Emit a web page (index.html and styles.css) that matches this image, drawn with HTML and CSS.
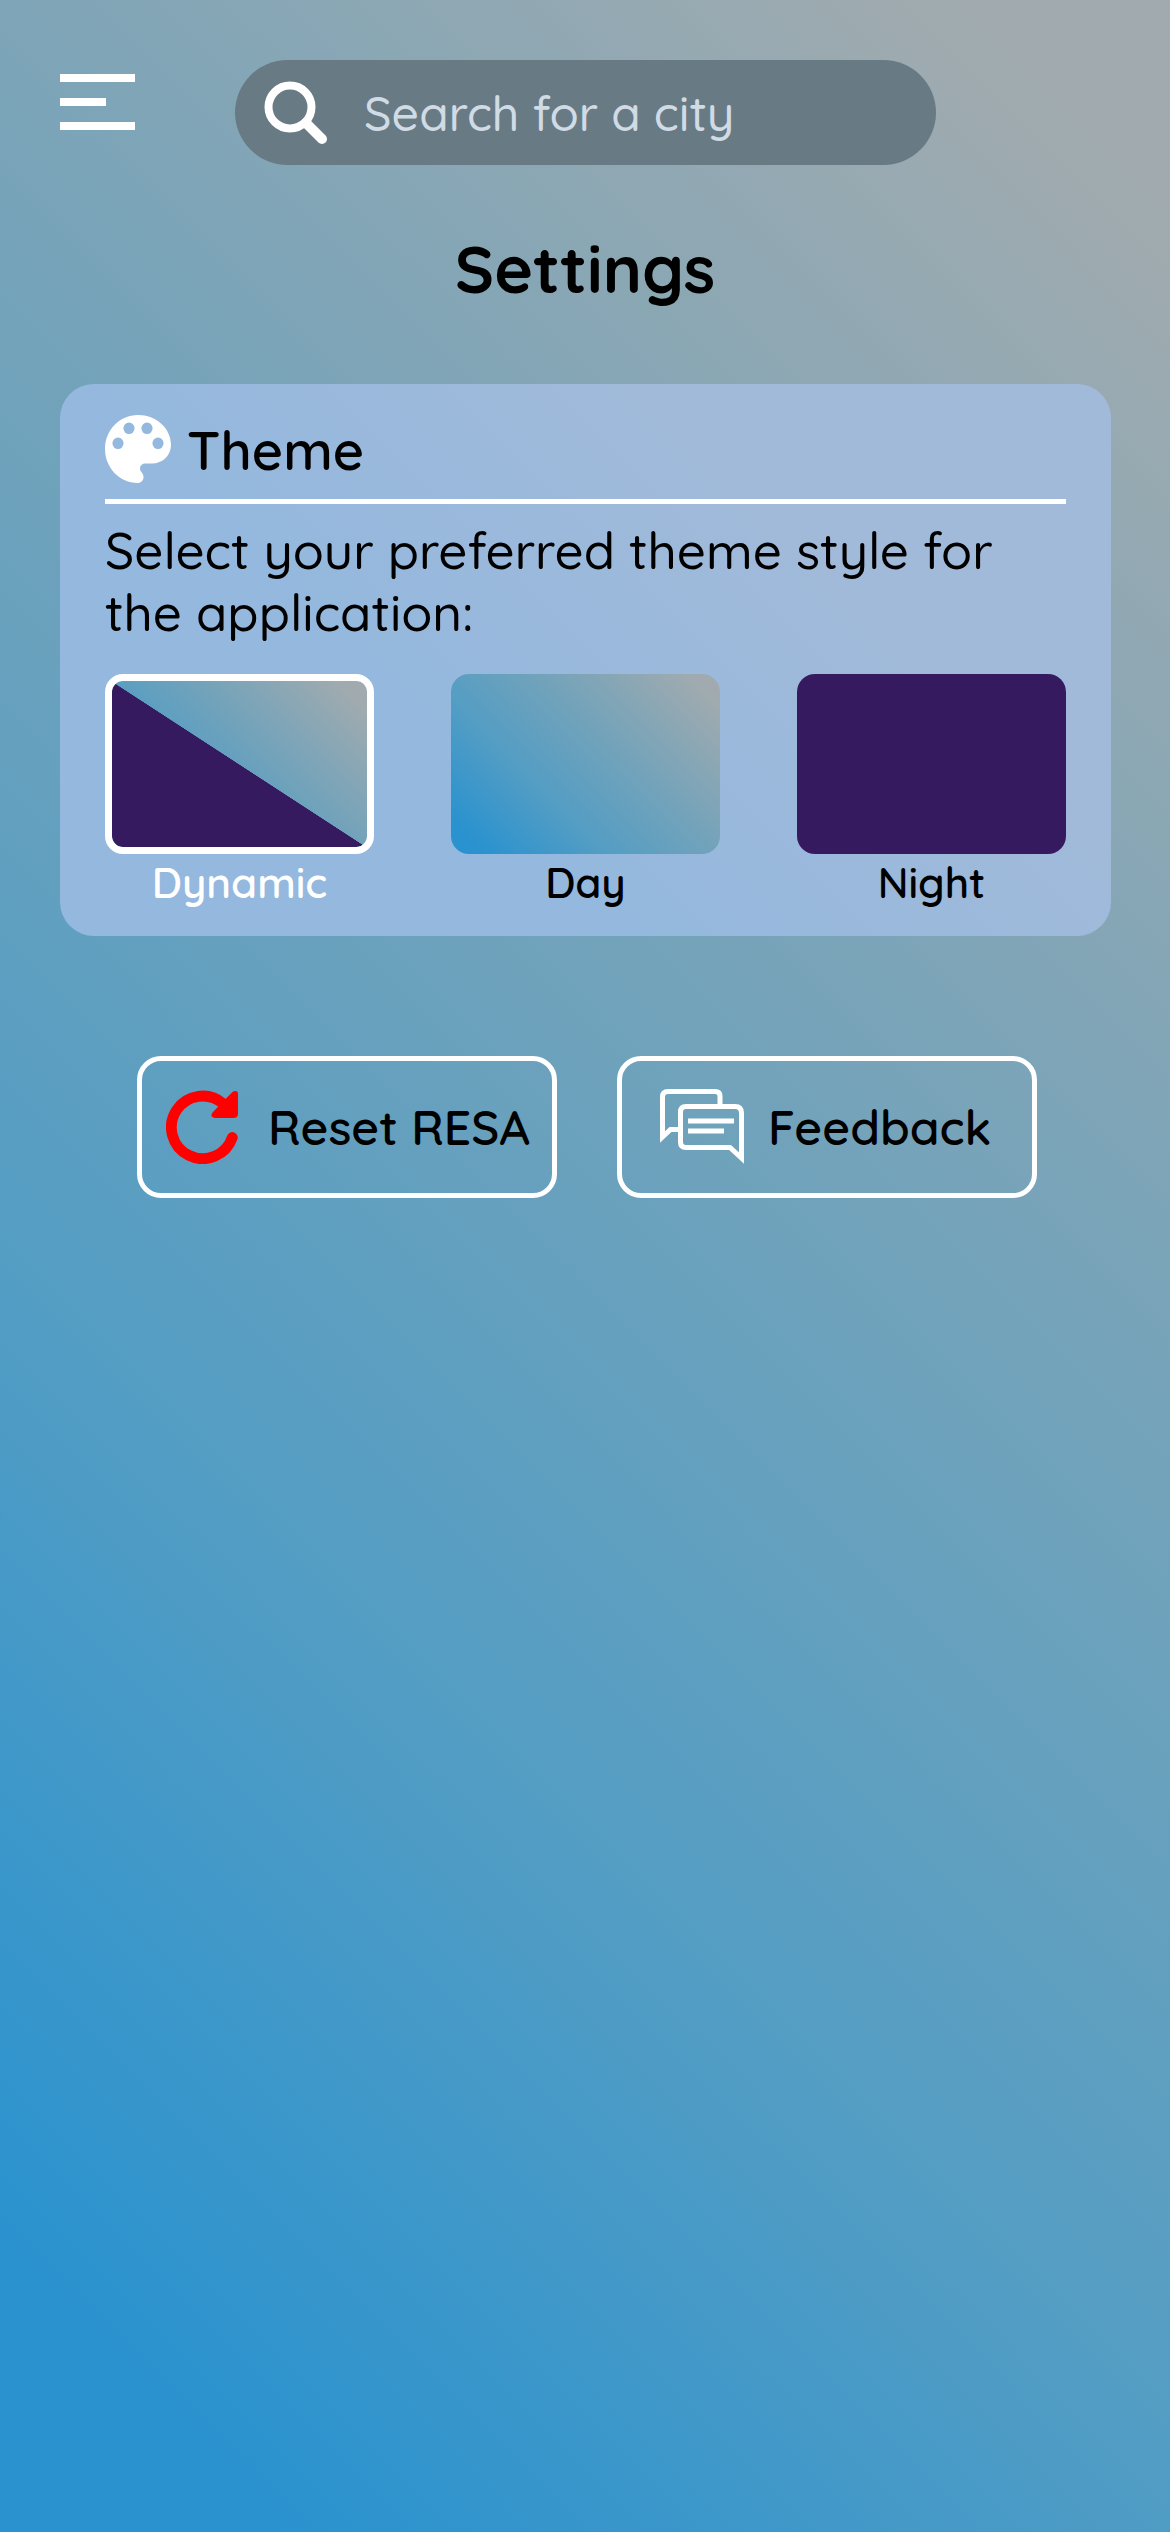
FILE: index.html
```html
<!DOCTYPE html>
<html lang="en">
<head>
<meta charset="utf-8">
<title>Settings</title>
<link rel="stylesheet" href="styles.css">
</head>
<body>
<header class="topbar">
  <button class="menu" aria-label="Menu"><span class="bar"></span><span class="bar bar-short"></span><span class="bar"></span></button>
  <div class="search">
    <svg class="search-icon" viewBox="0 0 64 64" fill="none" stroke="#fff" stroke-linecap="round"><circle cx="26" cy="26" r="21.5" stroke-width="8"/><path d="M42 42L58 58" stroke-width="10"/></svg>
    <span class="search-text">Search for a city</span>
  </div>
</header>
<main>
  <h1 class="title">Settings</h1>
  <section class="card">
    <div class="card-head">
      <svg class="palette" viewBox="0 0 66 68"><path fill="#fff" fill-rule="evenodd" d="M33 0C14.500 0 0 15 0 34C0 53 15 68 32.500 68C36 68 38.500 65.500 38.500 62C38.500 60 37.500 58.500 36.500 57.300C35.500 56 35 55 35 53.500C35 50.500 37.500 48.500 40.500 48.500H47C57.500 48.500 66 40.500 66 30C66 13 51 0 33 0ZM13 22.500a5.600 5.800 0 1 1 0 11.600a5.600 5.800 0 1 1 0-11.600ZM24 7.500a5.600 5.800 0 1 1 0 11.600a5.600 5.800 0 1 1 0-11.600ZM42 7.500a5.600 5.800 0 1 1 0 11.600a5.600 5.800 0 1 1 0-11.600ZM53 22.500a5.600 5.800 0 1 1 0 11.600a5.600 5.800 0 1 1 0-11.600Z"/></svg>
      <h2 class="card-title">Theme</h2>
    </div>
    <p class="desc">Select your preferred theme style for<br>the application:</p>
    <div class="themes">
      <div class="theme selected"><div class="swatch dynamic"></div><span class="label">Dynamic</span></div>
      <div class="theme"><div class="swatch day"></div><span class="label">Day</span></div>
      <div class="theme"><div class="swatch night"></div><span class="label">Night</span></div>
    </div>
  </section>
  <div class="actions">
    <button class="action reset">
      <svg class="reset-icon" viewBox="0 0 74 74"><path d="M57 13.500A31.300 31.300 0 1 0 66.300 47.500" fill="none" stroke="red" stroke-width="10.800" stroke-linecap="round"/><path fill="red" d="M47 22L59 9.500L67 1.500Q72 -0.500 72 4V23.500Q72 28 67.500 28H49Q43 27 47 22Z"/></svg>
      <span>Reset RESA</span>
    </button>
    <button class="action feedback">
      <svg class="feedback-icon" viewBox="0 0 84 76" fill="none" stroke="#fff" stroke-width="5"><path d="M60 17V7Q60 2.500 55 2.500H8Q2.500 2.500 2.500 8V48L10.500 40.500H20"/><path d="M26 17.500H75Q81.500 17.500 81.500 24V69L70 58.500H26Q20.500 58.500 20.500 53V23Q20.500 17.500 26 17.500Z"/><path d="M28 32H74M28 42H64"/></svg>
      <span>Feedback</span>
    </button>
  </div>
</main>
</body>
</html>
```

FILE: styles.css
```css
* { box-sizing: border-box; }
body {
  margin: 0;
  min-height: 2532px;
  padding: 60px 60px 0;
  font-family: Quicksand, Lato, sans-serif;
  font-weight: 500;
  color: #000;
  background: linear-gradient(45deg, #2992cf 7%, #539dc4 34%, #74a3ba 61%, #a1abaf 94%);
}
button { background: none; border: 0; padding: 0; font: inherit; color: inherit; }
.topbar { display: flex; align-items: flex-start; height: 106px; }
.menu { width: 75px; margin-top: 14px; display: flex; flex-direction: column; gap: 16px; }
.bar { width: 75px; height: 8px; background: #fff; }
.bar-short { width: 46px; }
.search {
  width: 701px; height: 105px; margin-left: 100px; padding-left: 29px;
  display: flex; align-items: center; gap: 36px;
  border-radius: 53px; background: #687a84;
}
.search-icon { width: 64px; height: 64px; }
.search-text { font-size: 48px; line-height: 58px; color: #d0dbe5; white-space: nowrap; }
.title { margin: 67px 0 0; height: 72px; line-height: 72px; font-size: 66px; font-weight: 700; text-align: center; }
.card {
  margin-top: 79px; height: 552px; width: 1051px; padding: 31px 45px 0; border-radius: 34px;
  background: linear-gradient(45deg, #94b8de 35%, #a2bad9 75%);
}
.card-head { display: flex; align-items: flex-start; gap: 16px; height: 89px; border-bottom: 5px solid #fff; }
.palette { width: 66px; height: 68px; }
.card-title { margin: 2px 0 0; font-size: 54px; line-height: 66px; font-weight: 600; white-space: nowrap; }
.desc { margin: 15px 0 0; font-size: 51px; line-height: 62px; white-space: nowrap; }
.themes { display: flex; justify-content: space-between; margin-top: 31px; }
.theme { width: 269px; display: flex; flex-direction: column; align-items: center; }
.swatch { width: 269px; height: 180px; border-radius: 18px; }
.dynamic { border: 7px solid #fff; background: linear-gradient(to top right, #361a60 49.700%, transparent 49.900%) padding-box, linear-gradient(45deg, #2992cf 7%, #539dc4 34%, #74a3ba 61%, #a1abaf 94%) padding-box; }
.day { background: linear-gradient(45deg, #2992cf 7%, #539dc4 34%, #74a3ba 61%, #a1abaf 94%); }
.night { background: #361a60; }
.label { margin-top: 3px; font-size: 42px; line-height: 52px; font-weight: 600; white-space: nowrap; }
.selected .label { color: #fff; }
.actions { display: flex; gap: 60px; margin: 120px 0 0 77px; }
.action { width: 420px; height: 142px; display: flex; align-items: center; border: 5px solid #fff; border-radius: 24px; font-size: 48px; line-height: 58px; font-weight: 600; white-space: nowrap; }
.reset { padding-left: 24px; gap: 28px; }
.reset-icon { width: 74px; height: 74px; flex: none; }
.feedback { padding-left: 38px; gap: 24px; }
.feedback-icon { width: 84px; height: 76px; flex: none; }
```
